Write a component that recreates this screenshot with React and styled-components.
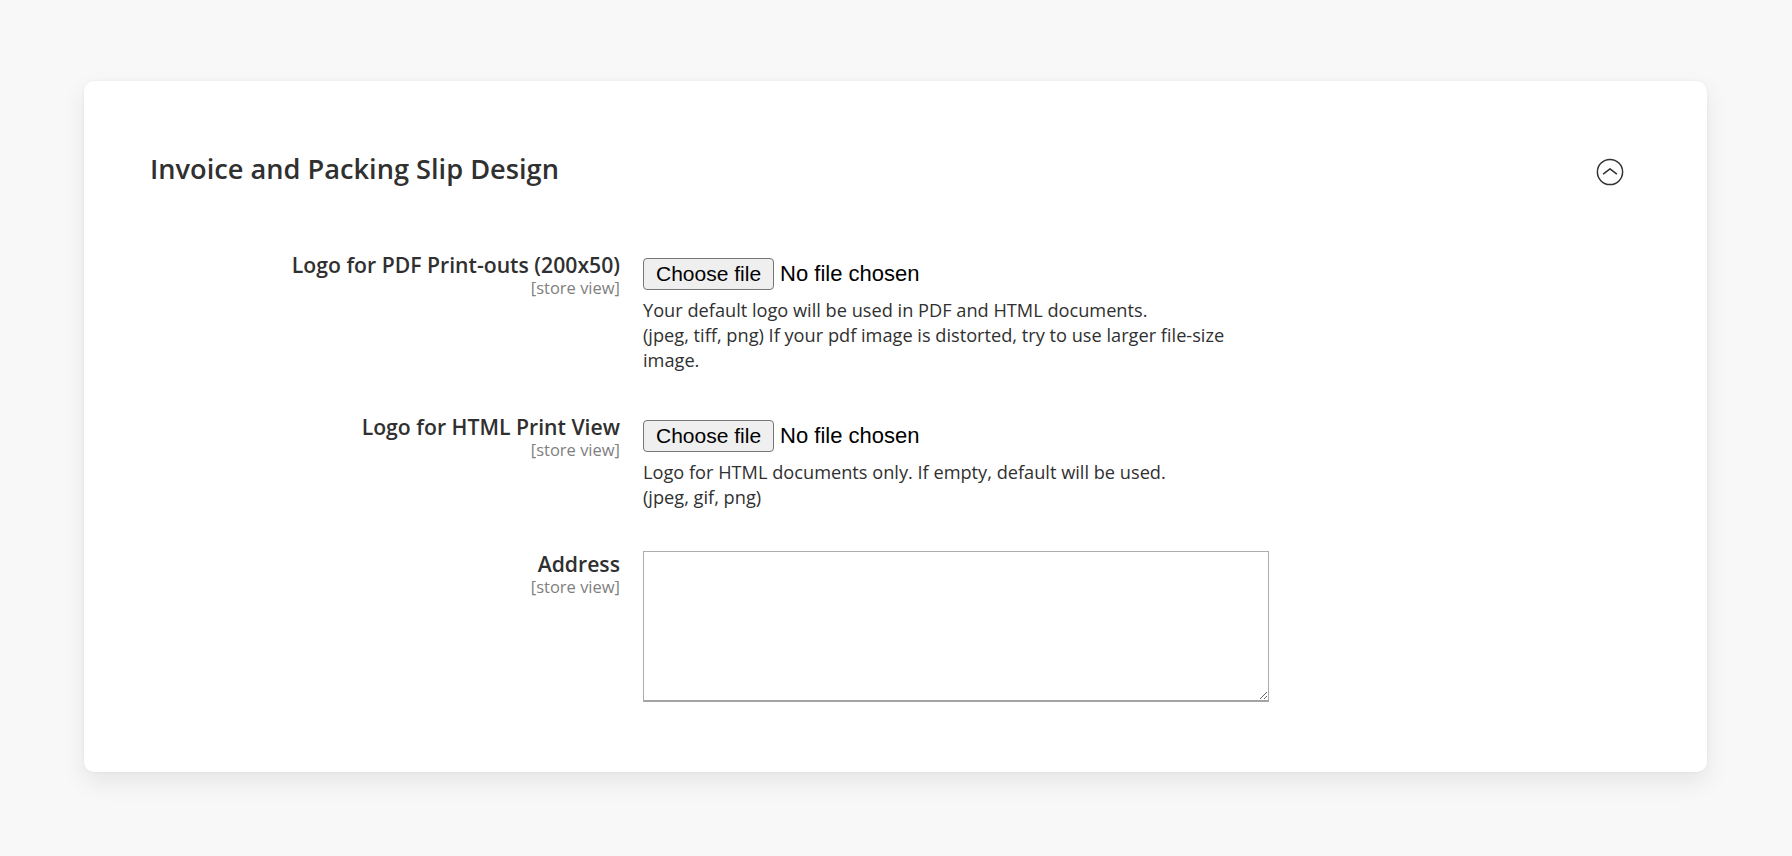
import React from 'react';
import styled, { createGlobalStyle } from 'styled-components';

const GlobalStyle = createGlobalStyle`
	html, body {
		margin: 0;
		padding: 0;
		background: #f8f8f8;
		font-family: "Open Sans", "Liberation Sans", sans-serif;
		color: #303030;
	}
`;

const Page = styled.div`
	min-height: 856px;
	box-sizing: border-box;
	padding: 81px 85px 0 84px;
`;

const Card = styled.section`
	background: #fff;
	border-radius: 10px;
	box-shadow: 0 0 3px rgba(0, 0, 0, 0.06), 0 10px 24px rgba(0, 0, 0, 0.08);
	padding: 72px 66px 70px;
`;

const Header = styled.div`
	display: flex;
	align-items: flex-start;
	justify-content: space-between;
	padding-right: 17px;
`;

const Title = styled.h2`
	margin: 0;
	font-size: 27.2px;
	line-height: 32px;
	font-weight: 600;
	color: #303030;
`;

const CollapseButton = styled.button`
	width: 28px;
	height: 28px;
	margin-top: 5px;
	padding: 0;
	border: 0;
	background: none;
	cursor: pointer;
	display: flex;
	color: #333;
`;

const Fields = styled.div`
	display: flex;
	flex-direction: column;
	gap: 40px;
	margin-top: 65px;
`;

const Row = styled.div`
	display: grid;
	grid-template-columns: 470px 626px;
	column-gap: 23px;
	align-items: start;
`;

const LabelCol = styled.div`
	text-align: right;
`;

const Label = styled.div`
	font-size: 21.2px;
	line-height: 28px;
	font-weight: 600;
	color: #303030;
`;

const Scope = styled.div`
	font-size: 16.5px;
	line-height: 18px;
	color: #808080;
`;

const Control = styled.div`
	margin-top: ${p => p.$offset || 0}px;
`;

const FileWrap = styled.label`
	display: flex;
	align-items: center;
	gap: 6px;
	font-family: "Liberation Sans", Arial, sans-serif;
	font-size: 21px;
	color: #000;
	cursor: pointer;
`;

const FakeButton = styled.span`
	display: inline-flex;
	align-items: center;
	height: 32px;
	box-sizing: border-box;
	padding: 0 12px;
	background: #efefef;
	border: 1px solid #767676;
	border-radius: 4px;
`;

const FileStatus = styled.span`
	font-size: 22px;
`;

const HiddenInput = styled.input`
	display: none;
`;

const Note = styled.div`
	margin-top: 8px;
	font-size: 18.2px;
	line-height: 25px;
	color: #303030;
`;

const TextArea = styled.textarea`
	display: block;
	width: 626px;
	height: 151px;
	box-sizing: border-box;
	border: 1px solid #adadad;
	border-bottom: 2px solid #a4a4a4;
	border-radius: 0;
	resize: both;
	font-family: "Open Sans", sans-serif;
	font-size: 16px;
	outline: none;
`;

const ChevronCircle = () => (
	<svg width="28" height="28" viewBox="0 0 28 28" fill="none" stroke="currentColor" strokeWidth="1.5">
		<circle cx="14" cy="14" r="12.6" />
		<polyline points="7.5,15.8 14,10.8 20.5,15.8" strokeLinecap="round" strokeLinejoin="round" />
	</svg>
);

const FileField = () => (
	<FileWrap>
		<HiddenInput type="file" />
		<FakeButton>Choose file</FakeButton>
		<FileStatus>No file chosen</FileStatus>
	</FileWrap>
);

const fields = [
	{
		label: 'Logo for PDF Print-outs (200x50)',
		type: 'file',
		notes: [
			'Your default logo will be used in PDF and HTML documents.',
			'(jpeg, tiff, png) If your pdf image is distorted, try to use larger file-size image.'
		]
	},
	{
		label: 'Logo for HTML Print View',
		type: 'file',
		notes: [
			'Logo for HTML documents only. If empty, default will be used.',
			'(jpeg, gif, png)'
		]
	},
	{
		label: 'Address',
		type: 'textarea',
		notes: []
	}
];

const App = () => {
	return (
		<>
			<GlobalStyle />
			<Page>
				<Card>
					<Header>
						<Title>Invoice and Packing Slip Design</Title>
						<CollapseButton aria-label="Collapse">
							<ChevronCircle />
						</CollapseButton>
					</Header>
					<Fields>
						{fields.map(({ label, type, notes }) => (
							<Row key={label}>
								<LabelCol>
									<Label>{label}</Label>
									<Scope>[store view]</Scope>
								</LabelCol>
								{type === 'file' ? (
									<Control $offset={7}>
										<FileField />
										<Note>
											{notes.map(n => <div key={n}>{n}</div>)}
										</Note>
									</Control>
								) : (
									<Control $offset={1}>
										<TextArea />
									</Control>
								)}
							</Row>
						))}
					</Fields>
				</Card>
			</Page>
		</>
	);
};

export default App;
